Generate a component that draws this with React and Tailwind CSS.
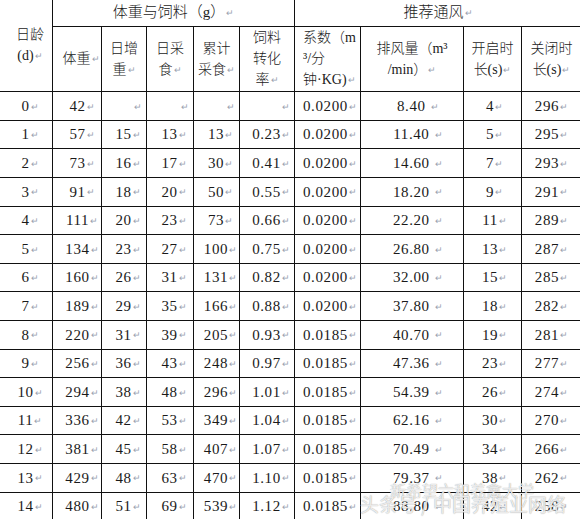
import React from 'react';

const rows = [
  [0, 42, '', '', '', '', '0.0200', '8.40', 4, 296],
  [1, 57, 15, 13, 13, '0.23', '0.0200', '11.40', 5, 295],
  [2, 73, 16, 17, 30, '0.41', '0.0200', '14.60', 7, 293],
  [3, 91, 18, 20, 50, '0.55', '0.0200', '18.20', 9, 291],
  [4, 111, 20, 23, 73, '0.66', '0.0200', '22.20', 11, 289],
  [5, 134, 23, 27, 100, '0.75', '0.0200', '26.80', 13, 287],
  [6, 160, 26, 31, 131, '0.82', '0.0200', '32.00', 15, 285],
  [7, 189, 29, 35, 166, '0.88', '0.0200', '37.80', 18, 282],
  [8, 220, 31, 39, 205, '0.93', '0.0185', '40.70', 19, 281],
  [9, 256, 36, 43, 248, '0.97', '0.0185', '47.36', 23, 277],
  [10, 294, 38, 48, 296, '1.01', '0.0185', '54.39', 26, 274],
  [11, 336, 42, 53, 349, '1.04', '0.0185', '62.16', 30, 270],
  [12, 381, 45, 58, 407, '1.07', '0.0185', '70.49', 34, 266],
  [13, 429, 48, 63, 470, '1.10', '0.0185', '79.37', 38, 262],
  [14, 480, 51, 69, 539, '1.12', '0.0185', '88.80', 42, 258],
];

// Word paragraph mark
function Mark() {
  return <span className="ml-px text-[9px] tracking-normal text-gray-400 align-middle">↵</span>;
}

const th = 'border border-[#111] p-0 font-light text-[14px] leading-[21px] text-center align-middle';
const td = 'border border-[#111] p-0 h-[28.6px] text-[15px] tracking-[0.6px] align-middle whitespace-nowrap';

function Cell({ value, className = '' }) {
  if (value === '') {
    return (
      <td className={`${td} text-right pr-1`}>
        <Mark />
      </td>
    );
  }
  return (
    <td className={`${td} ${className}`}>
      {value}
      <Mark />
    </td>
  );
}

export default function App() {
  return (
    <div className="relative w-[580px] h-[519px] overflow-hidden bg-white text-[#1a1a1a] font-['Liberation_Serif','Noto_Sans_CJK_SC',serif]">
      <table className="table-fixed border-collapse w-[582px] -ml-px -mt-px">
        <colgroup>
          <col className="w-[53px]" />
          <col className="w-[49px]" />
          <col className="w-[45px]" />
          <col className="w-[47px]" />
          <col className="w-[46px]" />
          <col className="w-[55px]" />
          <col className="w-[66px]" />
          <col className="w-[103px]" />
          <col className="w-[58px]" />
          <col className="w-[60px]" />
        </colgroup>
        <thead>
          <tr className="h-[27px]">
            <th rowSpan={2} className={`${th} pl-2`}>
              日龄<br />(d)<Mark />
            </th>
            <th colSpan={5} className={`${th} text-[15px]`}>
              体重与饲料（g）<Mark />
            </th>
            <th colSpan={4} className={`${th} text-[15px]`}>
              推荐通风<Mark />
            </th>
          </tr>
          <tr className="h-[64px]">
            <th className={`${th} pl-2`}>体重<Mark /></th>
            <th className={th}>日增<br />重<Mark /></th>
            <th className={th}>日采<br />食<Mark /></th>
            <th className={th}>累计<br />采食<Mark /></th>
            <th className={th}>饲料<br />转化<br />率<Mark /></th>
            <th className={`${th} text-left pl-2`}>
              系数（m<br />³/分<br />钟·KG)<Mark />
            </th>
            <th className={th}>排风量（m³<br />/min）<Mark /></th>
            <th className={th}>开启时<br />长(s)<Mark /></th>
            <th className={th}>关闭时<br />长(s)<Mark /></th>
          </tr>
        </thead>
        <tbody>
          {rows.map((r) => (
            <tr key={r[0]}>
              <Cell value={r[0]} className="text-center pl-2" />
              <Cell value={r[1]} className="text-center pl-[10px]" />
              <Cell value={r[2]} className="text-center pl-2" />
              <Cell value={r[3]} className="text-center pl-2" />
              <Cell value={r[4]} className="text-center pl-2" />
              <Cell value={r[5]} className="text-center pl-2" />
              <Cell value={r[6]} className="text-left pl-2" />
              <td className={`${td} text-center pl-3`}>
                {r[7]} <Mark />
              </td>
              <Cell value={r[8]} className="text-center pl-1" />
              <Cell value={r[9]} className="text-center" />
            </tr>
          ))}
        </tbody>
      </table>

      {/* watermark over the last rows */}
      <div className="absolute left-[360px] top-[482px] leading-none text-white/80 [text-shadow:0_0_1px_#888] font-['Noto_Sans_CJK_SC',sans-serif] pointer-events-none">
        <div className="pl-[30px] text-[16px]">新希望六和养禽大学</div>
        <div className="-mt-[4px] text-[19px]">头条号 / 中国养殖业网络</div>
      </div>
    </div>
  );
}
